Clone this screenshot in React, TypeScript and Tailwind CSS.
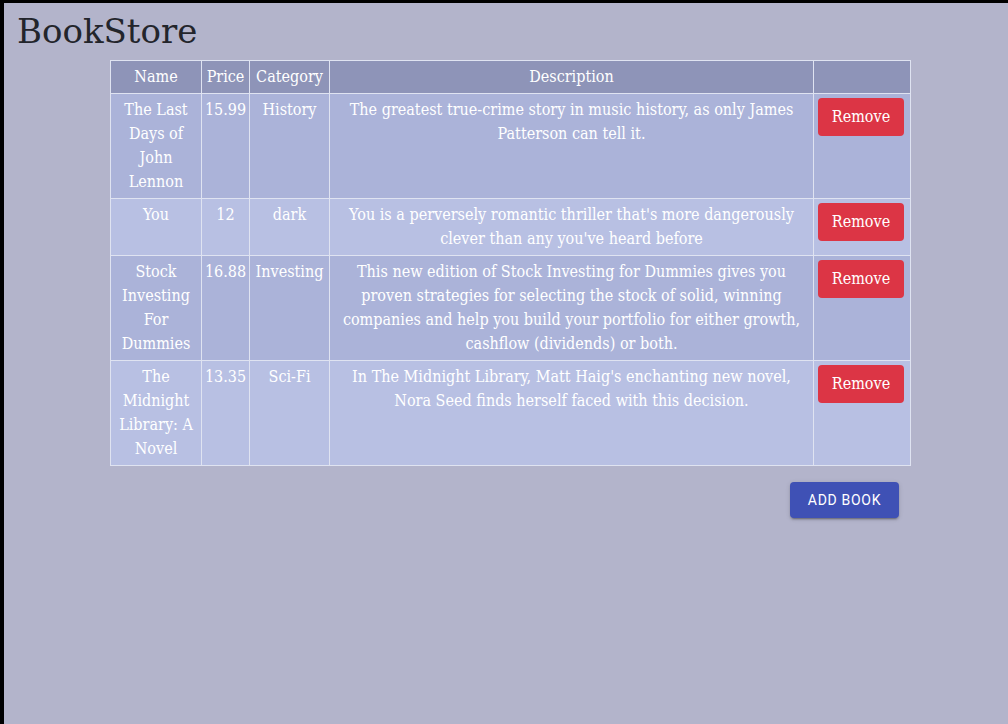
import React from 'react';

interface Book {
  name: string;
  price: string;
  category: string;
  description: string;
}

const books: Book[] = [
  {
    name: 'The Last Days of John Lennon',
    price: '15.99',
    category: 'History',
    description: 'The greatest true-crime story in music history, as only James Patterson can tell it.',
  },
  {
    name: 'You',
    price: '12',
    category: 'dark',
    description: "You is a perversely romantic thriller that's more dangerously clever than any you've heard before",
  },
  {
    name: 'Stock Investing For Dummies',
    price: '16.88',
    category: 'Investing',
    description:
      'This new edition of Stock Investing for Dummies gives you proven strategies for selecting the stock of solid, winning companies and help you build your portfolio for either growth, cashflow (dividends) or both.',
  },
  {
    name: 'The Midnight Library: A Novel',
    price: '13.35',
    category: 'Sci-Fi',
    description:
      "In The Midnight Library, Matt Haig's enchanting new novel, Nora Seed finds herself faced with this decision.",
  },
];

export default function App() {
  return (
    <div className="min-h-screen bg-[#b3b4cb] border-t-[3px] border-l-4 border-black font-['DejaVu_Serif_Condensed','DejaVu_Serif',serif]">
      <h1 className="pl-[13px] pt-[8px] font-['DejaVu_Serif',serif] text-[34px] leading-[40px] font-light text-[#23252b]">
        BookStore
      </h1>

      <table className="ml-[106px] mt-[9px] w-[800px] table-fixed border-collapse text-center text-white text-[16px] leading-[24px]">
        <colgroup>
          <col className="w-[91px]" />
          <col className="w-[48px]" />
          <col className="w-[80px]" />
          <col className="w-[484px]" />
          <col className="w-[97px]" />
        </colgroup>
        <thead>
          <tr className="bg-[#8e94b8]">
            <th className="border border-[#dfe3f1] px-1 py-1 font-normal">Name</th>
            <th className="border border-[#dfe3f1] px-0 py-1 font-normal">Price</th>
            <th className="border border-[#dfe3f1] px-0 py-1 font-normal">Category</th>
            <th className="border border-[#dfe3f1] px-1 py-1 font-normal">Description</th>
            <th className="border border-[#dfe3f1] px-1 py-1 font-normal"></th>
          </tr>
        </thead>
        <tbody>
          {books.map((b, i) => (
            <tr key={b.name} className={i % 2 === 0 ? 'bg-[#abb3d9]' : 'bg-[#b8c0e3]'}>
              <td className="border border-[#dfe3f1] px-1 py-1 align-top">{b.name}</td>
              <td className="border border-[#dfe3f1] px-0 py-1 align-top">{b.price}</td>
              <td className="border border-[#dfe3f1] px-0 py-1 align-top">{b.category}</td>
              <td className="border border-[#dfe3f1] px-1 py-1 align-top">{b.description}</td>
              <td className="border border-[#dfe3f1] px-1 py-1 align-top text-left">
                <button className="h-[38px] w-[86px] rounded bg-[#dc3545] text-white">Remove</button>
              </td>
            </tr>
          ))}
        </tbody>
      </table>

      <div className="ml-[106px] mt-[16px] flex w-[789px] justify-end">
        <button className="h-[36px] w-[109px] rounded bg-[#3f51b5] font-['Roboto',sans-serif] text-[14px] font-normal tracking-[0.7px] text-white shadow-[0_3px_1px_-2px_rgba(0,0,0,0.2),0_2px_2px_0_rgba(0,0,0,0.14),0_1px_5px_0_rgba(0,0,0,0.12)]">
          ADD BOOK
        </button>
      </div>
    </div>
  );
}
